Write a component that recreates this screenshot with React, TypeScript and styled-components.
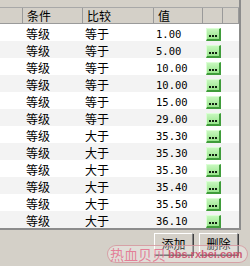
import React from "react";
import styled, { createGlobalStyle } from "styled-components";

const GlobalStyle = createGlobalStyle`
  html, body {
    margin: 0;
    padding: 0;
    background: #d4d0c8;
    overflow: hidden;
  }
  body {
    font-family: "Noto Sans CJK SC", "Liberation Sans", sans-serif;
    font-size: 12px;
    color: #000;
  }
`;

const COLS = "23px 60px 71px 49px 20px 16px";

const rows: [string, string, string][] = [
  ["等级", "等于", "1.00"],
  ["等级", "等于", "5.00"],
  ["等级", "等于", "10.00"],
  ["等级", "等于", "10.00"],
  ["等级", "等于", "15.00"],
  ["等级", "等于", "29.00"],
  ["等级", "大于", "35.30"],
  ["等级", "大于", "35.30"],
  ["等级", "大于", "35.30"],
  ["等级", "大于", "35.40"],
  ["等级", "大于", "35.50"],
  ["等级", "大于", "36.10"]
];

export default function App() {
  return (
    <>
      <GlobalStyle />
      <Page>
        <ListView>
          <TopStrip />
          <HeaderRow>
            <HeaderCell />
            <HeaderCell>条件</HeaderCell>
            <HeaderCell>比较</HeaderCell>
            <HeaderCell>值</HeaderCell>
            <HeaderCell />
            <HeaderCell />
          </HeaderRow>
          {rows.map(([cond, cmp, value], i) => (
            <Row key={i} odd={i % 2 === 1}>
              <Cell />
              <Cell pad={3}>{cond}</Cell>
              <Cell pad={2}>{cmp}</Cell>
              <ValueCell>{value}</ValueCell>
              <Cell>
                <MoreButton>
                  <Dot />
                  <Dot />
                  <Dot />
                </MoreButton>
              </Cell>
              <Cell />
            </Row>
          ))}
        </ListView>
        <ButtonBar>
          <WinButton>添加</WinButton>
          <WinButton>删除</WinButton>
        </ButtonBar>
        {/* forum watermark stamped over the bottom edge */}
        <Watermark>
          <WmName>热血贝贝</WmName>
          <WmUrl>bbs.rxbei.com</WmUrl>
        </Watermark>
      </Page>
    </>
  );
}

const Page = styled.div`
  position: relative;
  width: 250px;
  height: 266px;
  background: #d4d0c8;
`;

const ListView = styled.div`
  width: 239px;
  background: #fff;
  border-right: 2px solid #8c8c8c;
  border-bottom: 2px solid #8c8c8c;
`;

const TopStrip = styled.div`
  height: 7px;
  background: #d4d0c8;
  border-bottom: 1px solid #a8a8a8;
`;

const HeaderRow = styled.div`
  display: grid;
  grid-template-columns: ${COLS};
  height: 15px;
  background: #d4d0c8;
  border-bottom: 1px solid #9a9a9a;
`;

const HeaderCell = styled.div`
  display: flex;
  align-items: center;
  padding-left: 4px;
  border-right: 1px solid #9a9a9a;
  line-height: 12px;
  white-space: nowrap;
  overflow: hidden;
`;

const Row = styled.div<{ odd: boolean }>`
  display: grid;
  grid-template-columns: ${COLS};
  height: 17px;
  background: ${({ odd }) => (odd ? "#f3f3f3" : "#ffffff")};
`;

const Cell = styled.div<{ pad?: number }>`
  display: flex;
  align-items: center;
  padding-left: ${({ pad }) => pad || 0}px;
  padding-top: 2px;
  line-height: 12px;
  white-space: nowrap;
  overflow: hidden;
`;

const ValueCell = styled(Cell)`
  padding-left: 2px;
  font-family: "DejaVu Sans Mono", "Liberation Mono", monospace;
  font-size: 10.5px;
`;

const MoreButton = styled.div`
  display: flex;
  align-items: flex-end;
  justify-content: center;
  gap: 1px;
  box-sizing: border-box;
  width: 15px;
  height: 13px;
  margin-left: 3px;
  margin-top: 2px;
  padding-bottom: 2px;
  background: linear-gradient(#c6f7bd, #98e48c);
  border-top: 1px solid #dcffd6;
  border-left: 1px solid #dcffd6;
  border-right: 2px solid #3f9c3a;
  border-bottom: 2px solid #3f9c3a;
`;

const Dot = styled.span`
  width: 2px;
  height: 2px;
  background: #102010;
`;

const ButtonBar = styled.div`
  display: flex;
  justify-content: flex-end;
  gap: 6px;
  padding: 3px 12px 0 0;
`;

const WinButton = styled.div`
  display: flex;
  align-items: center;
  justify-content: center;
  box-sizing: border-box;
  width: 39px;
  height: 22px;
  background: #d4d0c8;
  border-top: 1px solid #ffffff;
  border-left: 1px solid #ffffff;
  border-right: 1px solid #808080;
  border-bottom: 1px solid #808080;
  box-shadow: 1px 1px 0 #404040;
  font-size: 12px;
  line-height: 12px;
`;

const Watermark = styled.div`
  position: absolute;
  left: 107px;
  top: 245px;
  display: flex;
  align-items: center;
  gap: 2px;
  box-sizing: border-box;
  width: 141px;
  height: 18px;
  padding-left: 2px;
  border: 1px solid rgba(210, 140, 150, 0.75);
  border-radius: 9px;
  background: rgba(255, 255, 255, 0.3);
`;

const WmName = styled.span`
  font-size: 14px;
  line-height: 14px;
  color: rgba(228, 110, 140, 0.85);
`;

const WmUrl = styled.span`
  font-family: "Liberation Sans", sans-serif;
  font-weight: bold;
  font-size: 11px;
  line-height: 11px;
  color: rgba(200, 70, 100, 0.85);
`;
